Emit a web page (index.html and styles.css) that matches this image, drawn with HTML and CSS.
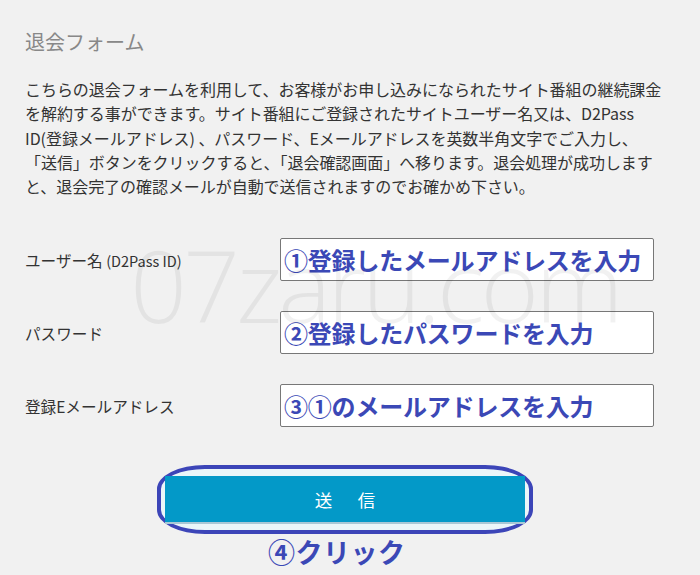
FILE: index.html
```html
<!DOCTYPE html>
<html lang="ja">
<head>
<meta charset="utf-8">
<title>退会フォーム</title>
<link rel="stylesheet" href="styles.css">
</head>
<body>
<main class="page">
  <h1 class="title">退会フォーム</h1>
  <p class="intro">こちらの退会フォームを利用して、お客様がお申し込みになられたサイト番組の継続課金<br>を解約する事ができます。サイト番組にご登録されたサイトユーザー名又は、D2Pass<br>ID(登録メールアドレス) 、パスワード、Eメールアドレスを英数半角文字でご入力し、<br>「送信」ボタンをクリックすると、「退会確認画面」へ移ります。退会処理が成功します<br>と、退会完了の確認メールが自動で送信されますのでお確かめ下さい。</p>

  <form class="form">
    <div class="row">
      <label class="label">ユーザー名 <span class="small">(D2Pass ID)</span></label>
      <div class="field">①登録したメールアドレスを入力</div>
    </div>
    <div class="row">
      <label class="label">パスワード</label>
      <div class="field">②登録したパスワードを入力</div>
    </div>
    <div class="row">
      <label class="label">登録Eメールアドレス</label>
      <div class="field">③①のメールアドレスを入力</div>
    </div>

    <div class="submit-wrap">
      <button type="button" class="submit">送　信</button>
    </div>
    <div class="note">④クリック</div>
  </form>
  <div class="watermark">07zaru.com</div>
</main>
</body>
</html>
```

FILE: styles.css
```css
html, body {
  margin: 0;
  padding: 0;
}
body {
  background: #f1f1f1;
  font-family: "Noto Sans CJK JP", "Noto Sans", sans-serif;
  color: #333;
  width: 700px;
  height: 575px;
  overflow: hidden;
}
.page {
  position: relative;
  padding: 30px 25px 0 25px;
}
.title {
  margin: 0;
  font-size: 20px;
  line-height: 24px;
  font-weight: normal;
  color: #888;
}
.intro {
  margin: 23px 0 0 0;
  font-size: 16px;
  line-height: 24.3px;
  color: #333;
  white-space: nowrap;
  letter-spacing: -0.05px;
}
.form {
  margin-top: 40px;
}
.row {
  display: grid;
  grid-template-columns: 255px 374px;
  align-items: center;
  height: 43px;
  margin-bottom: 30px;
}
.label {
  font-size: 15.6px;
  color: #333;
  padding-top: 1px;
}
.small {
  font-size: 14.5px;
}
.field {
  box-sizing: border-box;
  height: 43px;
  background: #fff;
  border: 1px solid #777;
  border-radius: 2px;
  padding: 0 0 0 3px;
  display: flex;
  align-items: center;
  font-size: 24px;
  font-weight: bold;
  color: #3b48b6;
  letter-spacing: -0.2px;
  white-space: nowrap;
}
.submit-wrap {
  box-sizing: border-box;
  width: 376px;
  margin: 38px 0 0 132px;
  padding: 7px 4px 6px 4px;
  border: 4px solid #3c45b8;
  border-radius: 48px / 24px;
  background: #eaf6f9;
}
.submit {
  display: block;
  width: 100%;
  height: 48px;
  border: 0;
  border-bottom: 2px solid #a9c8d6;
  margin: 0;
  background: #0399c8;
  color: #fff;
  font-family: "Noto Sans CJK JP", sans-serif;
  font-size: 17.5px;
  letter-spacing: 4px;
  padding: 0 0 0 4px;
}
.note {
  margin: 1px 0 0 243px;
  font-size: 27px;
  line-height: 34px;
  font-weight: bold;
  color: #3b48b6;
  letter-spacing: 0.5px;
}
.watermark {
  position: absolute;
  left: 130px;
  top: 224px;
  font-family: "Open Sans", sans-serif;
  font-weight: 300;
  font-size: 100px;
  line-height: 120px;
  letter-spacing: -4px;
  color: rgba(0, 0, 0, 0.055);
  pointer-events: none;
  white-space: nowrap;
}
```
